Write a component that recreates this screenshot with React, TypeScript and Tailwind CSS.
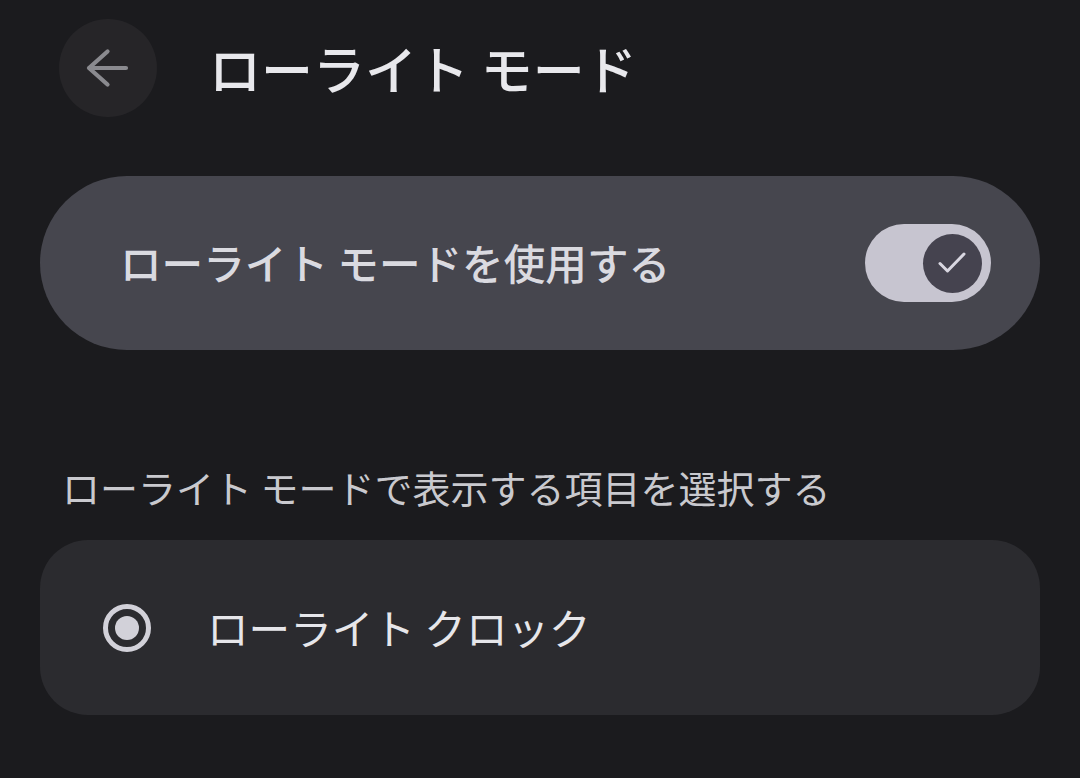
import { useState } from "react"

const font = { fontFamily: '"Noto Sans CJK JP", "Noto Sans", sans-serif' }

const BackArrow = () => (
  <svg width="98" height="98" viewBox="0 0 98 98" fill="none">
    <path
      d="M30 49H67M30 49L48.5 32.5M30 49L48.5 65.5"
      stroke="#8a8a8f"
      strokeWidth="4.2"
      strokeLinecap="round"
      strokeLinejoin="round"
    />
  </svg>
)

const Toggle = ({ on, onChange }: { on: boolean; onChange: (v: boolean) => void }) => {
  return (
    <button
      onClick={() => onChange(!on)}
      className="flex h-[78px] w-[126px] items-center rounded-full bg-[#c7c5d0] px-[9px]"
    >
      <span className="ml-auto flex h-[59px] w-[59px] items-center justify-center rounded-full bg-[#45434f]">
        <svg width="59" height="59" viewBox="0 0 59 59" fill="none">
          <path
            d="M17 29.5L24.5 37L41 20"
            stroke="#d9d7e1"
            strokeWidth="3"
            strokeLinecap="round"
            strokeLinejoin="round"
          />
        </svg>
      </span>
    </button>
  )
}

const Radio = () => (
  <span className="flex h-[48px] w-[48px] shrink-0 items-center justify-center rounded-full border-[5px] border-[#d2d1d9]">
    <span className="h-[24px] w-[24px] rounded-full bg-[#d2d1d9]" />
  </span>
)

export default function App() {
  const [enabled, setEnabled] = useState(true)

  return (
    <div className="h-[778px] w-[1080px] overflow-hidden bg-[#1b1b1e]" style={font}>
      <div className="flex items-center pl-[59px] pt-[19px]">
        <button className="flex h-[98px] w-[98px] items-center justify-center rounded-full bg-[#262528]">
          <BackArrow />
        </button>
        <h1 className="ml-[52px] text-[52px] leading-none font-medium text-[#e8e8ec]">
          ローライト モード
        </h1>
      </div>

      <div className="mx-[40px] mt-[59px] flex h-[174px] items-center justify-between rounded-full bg-[#46464e] pl-[80px] pr-[49px]">
        <span className="text-[41.6px] leading-none font-medium text-[#dadae0]">
          ローライト モードを使用する
        </span>
        <Toggle on={enabled} onChange={setEnabled} />
      </div>

      <div className="ml-[62px] mt-[110px] h-[53px] text-[38px] leading-[53px] text-[#c9c9ce]">
        ローライト モードで表示する項目を選択する
      </div>

      <div className="mx-[40px] mt-[27px] flex h-[175px] items-center gap-[56px] rounded-[48px] bg-[#2b2b2f] pl-[63px]">
        <Radio />
        <span className="text-[41.6px] leading-none text-[#e6e6ea]">ローライト クロック</span>
      </div>
    </div>
  )
}
